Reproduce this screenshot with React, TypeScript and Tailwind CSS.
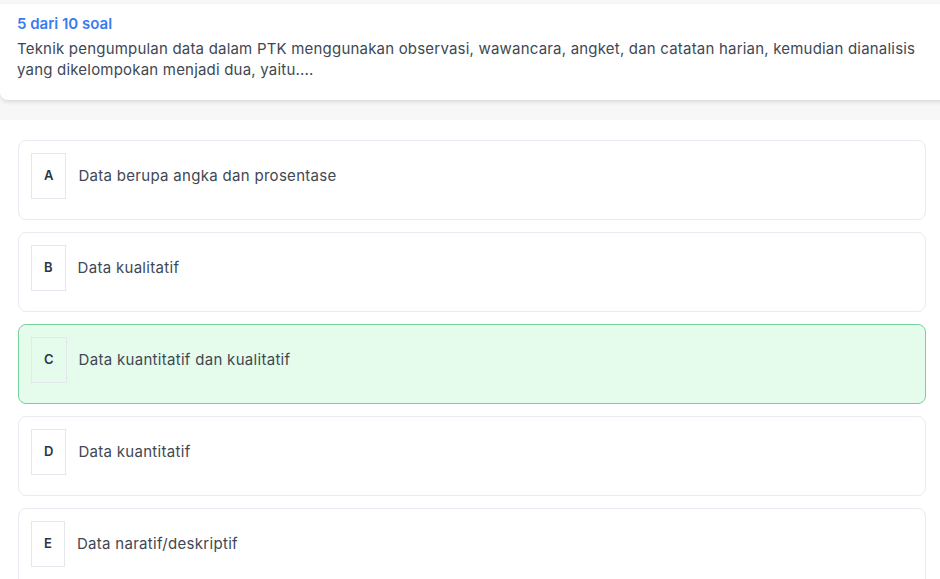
const options = [
  { key: "A", text: "Data berupa angka dan prosentase" },
  { key: "B", text: "Data kualitatif" },
  { key: "C", text: "Data kuantitatif dan kualitatif", selected: true },
  { key: "D", text: "Data kuantitatif" },
  { key: "E", text: "Data naratif/deskriptif" },
];

const OptionCard = (props: { letter: string; text: string; selected?: boolean }) => {
  return (
    <div
      className={
        "flex items-start gap-3 h-[80px] rounded-lg border px-3 pt-3 " +
        (props.selected ? "border-[#74d39a] bg-[#e5fbec]" : "border-[#e8ecf2] bg-white")
      }
    >
      <div className="flex h-[46px] items-center justify-center border border-[#e4e8ee] px-3 text-[13px] font-semibold text-[#2d3540]">
        {props.letter}
      </div>
      <p className="pt-[12px] text-[15px] leading-[21px] tracking-[0.3px] text-[#404853]">{props.text}</p>
    </div>
  );
};

export default function App() {
  return (
    <div className="min-h-screen bg-[#f7f7f8] pt-[4px] font-['Inter',sans-serif]">
      <div className="w-[960px] rounded-bl-lg bg-white px-[17px] pt-[10px] pb-[20px] shadow-[0_2px_4px_rgba(0,0,0,0.12)]">
        <p className="text-[15px] font-semibold leading-[20px] text-[#3a7cf0]">5 dari 10 soal</p>
        <p className="mt-[4px] w-[910px] text-[15px] leading-[21px] tracking-[0.2px] text-[#404853]">
          Teknik pengumpulan data dalam PTK menggunakan observasi, wawancara, angket, dan catatan harian, kemudian dianalisis
          yang dikelompokan menjadi dua, yaitu....
        </p>
      </div>
      <div className="mt-[20px] flex flex-col gap-3 bg-white px-[18px] pt-[20px] pb-6 pr-[14px]">
        {options.map((o) => (
          <OptionCard key={o.key} letter={o.key} text={o.text} selected={o.selected} />
        ))}
      </div>
    </div>
  );
}
